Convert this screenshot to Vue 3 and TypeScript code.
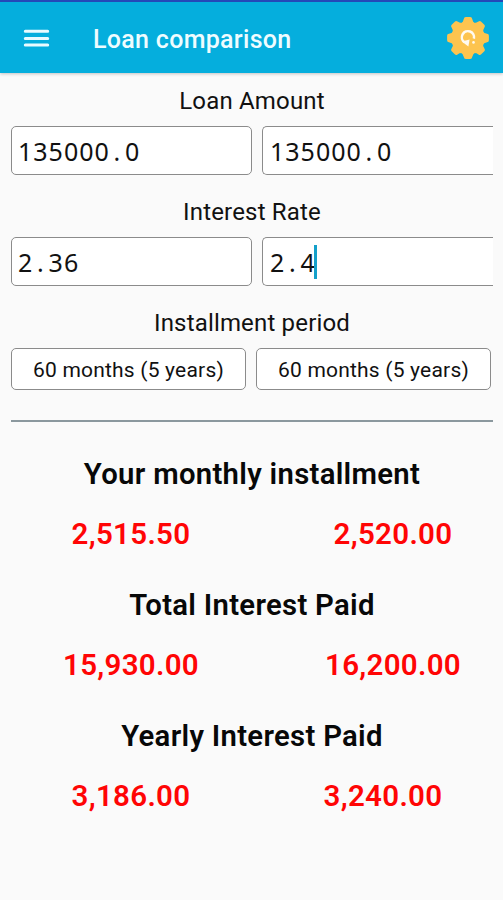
<script setup lang="ts">
import { ref } from 'vue'

interface Field { label: string; values: string[]; focused?: number }
interface Result { title: string; values: string[]; shifted?: boolean }

const fields = ref<Field[]>([
  { label: 'Loan Amount', values: ['135000.0', '135000.0'] },
  { label: 'Interest Rate', values: ['2.36', '2.4'], focused: 1 },
])
const periods = ref<string[]>(['60 months (5 years)', '60 months (5 years)'])
const results = ref<Result[]>([
  { title: 'Your monthly installment', values: ['2,515.50', '2,520.00'] },
  { title: 'Total Interest Paid', values: ['15,930.00', '16,200.00'] },
  { title: 'Yearly Interest Paid', values: ['3,186.00', '3,240.00'], shifted: true },
])
</script>

<template>
  <div class="screen">
    <header class="bar">
      <button class="menu" aria-label="Menu">
        <svg width="27" height="20" viewBox="0 0 27 20">
          <path d="M2.3 2.3H24.7M2.3 9.5H24.7M2.3 16H24.7" stroke="#e9fbff" stroke-width="3" stroke-linecap="round" />
        </svg>
      </button>
      <h1 class="title">Loan comparison</h1>
      <button class="reset" aria-label="Reset">
        <svg width="44" height="44" viewBox="-22 -22 44 44">
          <g fill="#fdc44f">
            <circle r="16.6" />
            <path v-for="n in 8" :key="n" :transform="`rotate(${n * 45})`" d="M-7.5 -14 Q-4.6 -16 -4.2 -19 Q-4 -20.9 -2.2 -20.9 H2.2 Q4 -20.9 4.2 -19 Q4.6 -16 7.5 -14Z" />
          </g>
          <path d="M-3.6 4.2 A6.1 6.1 0 1 1 5.9 0.6" fill="none" stroke="#fffaf0" stroke-width="2.5" />
          <path d="M-6.2 3.6 L1.6 1.4 L0.4 8.6 Z" fill="#fffaf0" />
          <circle cx="5.5" cy="4.4" r="1.3" fill="#fffaf0" />
        </svg>
      </button>
    </header>

    <main class="content">
      <section v-for="field in fields" :key="field.label" class="field">
        <h2 class="label">{{ field.label }}</h2>
        <div class="inputs">
          <div v-for="(value, i) in field.values" :key="i" class="input">
            <span v-for="(ch, c) in value" :key="c" class="digit">{{ ch }}</span>
            <span v-if="field.focused === i" class="caret"></span>
          </div>
        </div>
      </section>

      <section class="field period">
        <h2 class="label">Installment period</h2>
        <div class="choices">
          <button v-for="(period, i) in periods" :key="i" class="choice">{{ period }}</button>
        </div>
      </section>

      <hr class="rule" />

      <section v-for="result in results" :key="result.title" class="result">
        <h3 class="heading">{{ result.title }}</h3>
        <div class="amounts" :class="{ shifted: result.shifted }">
          <span v-for="value in result.values" :key="value" class="amount">{{ value }}</span>
        </div>
      </section>
    </main>
  </div>
</template>

<style>
body { background: #fafafa; }
</style>

<style scoped>
.screen {
  box-sizing: border-box;
  width: 503px;
  height: 900px;
  overflow: hidden;
  background: #fafafa;
  color: #111;
  font-family: Roboto, sans-serif;
}
button { margin: 0; padding: 0; border: 0; background: none; color: inherit; font: inherit; }
h1, h2, h3 { margin: 0; }
.bar {
  box-sizing: border-box;
  display: flex;
  align-items: center;
  height: 73px;
  padding: 4px 13px 0 23px;
  border-top: 2px solid #2448b8;
  background: #05aedd;
  box-shadow: 0 1px 3px rgba(0, 0, 0, 0.22);
}
.menu { display: flex; width: 70px; margin-bottom: 2px; }
.title { flex: 1; color: #effcff; font-size: 25px; font-weight: 500; line-height: 32px; letter-spacing: 0.3px; }
.reset { display: flex; margin-bottom: 3px; }
.content { padding: 12px 10px 0 11px; }
.field { height: 111px; }
.label { height: 32px; text-align: center; font-size: 24px; font-weight: 400; line-height: 32px; letter-spacing: 0.17px; }
.inputs { display: grid; grid-template-columns: 241px 231px; gap: 10px; margin-top: 9px; }
.input {
  box-sizing: border-box;
  display: flex;
  align-items: center;
  height: 49px;
  padding-left: 5.5px;
  border: 1.5px solid #8b8b8b;
  border-radius: 5px;
  background: #fff;
  font-family: "Noto Sans", sans-serif;
  font-size: 25px;
}
.input:last-child { padding-left: 6.5px; border-right: 0; border-radius: 5px 0 0 5px; }
.digit { width: 15.3px; text-align: center; }
.caret { width: 3px; height: 34px; margin-left: -1px; background: #14a0ca; }
.period { height: 113px; }
.choices { display: grid; grid-template-columns: 235px 235px; gap: 10px; margin-top: 9px; }
.choice {
  height: 42px;
  padding-top: 2px;
  border: 1.5px solid #8b8b8b;
  border-radius: 5px;
  background: #fff;
  font-size: 21px;
  letter-spacing: 0.2px;
}
.rule { height: 2px; margin: 0 0 35px; border: 0; background: #8b989e; }
.result { height: 131px; }
.heading { color: #080808; text-align: center; font-size: 29.3px; font-weight: 600; line-height: 34px; letter-spacing: 0.3px; }
.amounts { display: grid; grid-template-columns: 240px 240px; column-gap: 22px; margin: 26px -10px 0 0; }
.shifted { column-gap: 12px; }
.amount { color: #ff0505; text-align: center; font-size: 29.5px; font-weight: 600; line-height: 35px; letter-spacing: 0.3px; }
</style>
